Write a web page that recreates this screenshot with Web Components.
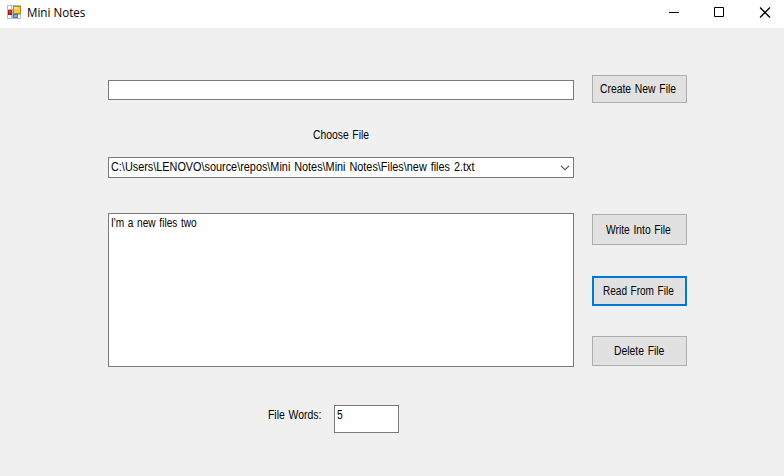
<!DOCTYPE html>
<html lang="en"><head><meta charset="utf-8"><title>Mini Notes</title>
<style>html,body{margin:0;height:100%;overflow:hidden;background:#f0f0f0}body{font:12px/14px "Liberation Sans",Arial,sans-serif;color:#000}</style></head>
<body><notes-window></notes-window>
<script>
const define=(name,html,setup)=>customElements.define(name,class extends HTMLElement{
  constructor(){super();this.attachShadow({mode:'open'}).innerHTML=html}
  connectedCallback(){if(setup)setup(this)}
});
// A single line of text condensed to the given width.
define('ui-text',`<style>:host{display:block;height:14px;white-space:pre;flex:none;word-spacing:1px}span{display:inline-block;transform-origin:0 50%}</style><span><slot></slot></span>`,el=>{
  const s=el.shadowRoot.querySelector('span'),w=+el.getAttribute('w');
  el.style.width=w+'px';
  s.style.transform=`scaleX(${w/s.offsetWidth})`;
});
define('ui-button',`<style>:host{display:flex;align-items:center;justify-content:center;box-sizing:border-box;width:95px;background:#e1e1e1;border:1px solid #adadad;flex:none}
:host([focused]){border:2px solid #0078d7}</style><slot></slot>`);
define('ui-box',`<style>:host{display:flex;align-items:flex-start;justify-content:space-between;box-sizing:border-box;background:#fff;border:1px solid #7a7a7a;padding:2px;flex:none}</style><slot></slot>`);
define('ui-chevron',`<style>:host{display:block;width:10px;height:6px;margin:5px 1px 0 0}svg{display:block}</style><svg width="10" height="6" fill="none" stroke="#444" stroke-width="1.1"><path d="M1 .8 5 4.8 9 .8"/></svg>`);
define('title-bar',`<style>:host{display:flex;height:28px;background:#fff;box-sizing:border-box;padding-left:7px;flex:none}
.icon{margin-top:5px;margin-right:6px;flex:none}ui-text{font-family:"Open Sans","Noto Sans",sans-serif;margin-top:6px;word-spacing:0}.ctl{margin-left:auto;flex:none}</style>
<svg class="icon" width="14" height="14" shape-rendering="crispEdges"><path fill="#bcbcbc" d="M0 0h14v14H0z"/><path fill="#fff" d="M1 1h3v3H1zM5 1h2v3H5zM1 10h3v3H1z"/><path fill="#b01818" d="M1 5h4v5H1z"/><path fill="#e83c30" d="M2 6h2v2H2z"/><path fill="#b88218" d="M6 1h8v8H6z"/><path fill="#fac944" d="M7 2h6v6H7z"/><path fill="#ffe391" d="M7 2h4v2H7z"/><path fill="#3478cf" d="M6 9h5v4H6z"/><path fill="#79b4f8" d="M7 10h3v2H7z"/><path fill="#fff" d="M11 10h2v3h-2z"/></svg>
<ui-text w="58">Mini Notes</ui-text>
<svg class="ctl" width="120" height="28" fill="none" stroke="#000"><path d="M5 12.5h10M50.500 7.500h9v9h-9z"/><path stroke-width="1.3" d="M96 7.500l10 10M106 7.500l-10 10"/></svg>`);
define('notes-window',`<style>:host{display:flex;flex-direction:column;width:784px;height:476px;background:#f0f0f0;overflow:hidden}
main{display:grid;grid-template-columns:466px 95px;column-gap:18px;padding:47px 0 0 108px}
.left,.right{display:flex;flex-direction:column}
.left{padding-top:5px}.name{height:20px}.choose{margin:28px 0 0 205px}.path{height:21px;margin-top:15px}.body{height:154px;margin-top:35px}
.words{display:flex;margin:38px 0 0 160px}.words>ui-text{margin-top:3px}.count{width:65px;height:28px;margin-left:13px}</style>
<title-bar></title-bar><main><div class="left">
<ui-box class="name"></ui-box><ui-text class="choose" w="56">Choose File</ui-text>
<ui-box class="path"><ui-text w="363">C:\\Users\\LENOVO\\source\\repos\\Mini Notes\\Mini Notes\\Files\\new files 2.txt</ui-text><ui-chevron></ui-chevron></ui-box>
<ui-box class="body"><ui-text w="86">I'm a new files two</ui-text></ui-box>
<div class="words"><ui-text w="53">File Words:</ui-text><ui-box class="count"><ui-text w="6">5</ui-text></ui-box></div>
</div><div class="right">
<ui-button style="height:28px;padding-right:3px"><ui-text w="76">Create New File</ui-text></ui-button>
<ui-button style="height:31px;margin-top:111px;padding-right:2px"><ui-text w="65">Write Into File</ui-text></ui-button>
<ui-button focused style="height:30px;margin-top:31px;padding-right:2px"><ui-text w="71">Read From File</ui-text></ui-button>
<ui-button style="height:30px;margin-top:30px;padding-right:2px"><ui-text w="50">Delete File</ui-text></ui-button>
</div></main>`);
</script></body></html>
